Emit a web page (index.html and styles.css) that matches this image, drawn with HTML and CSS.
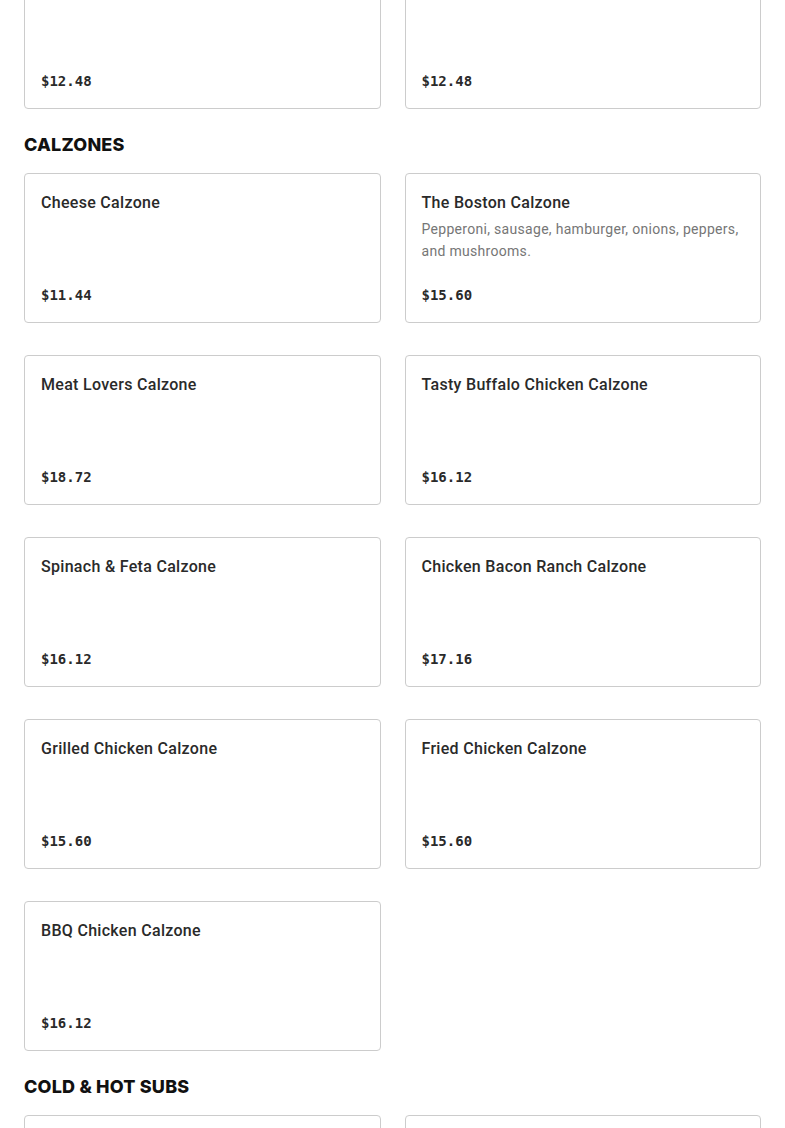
FILE: index.html
```html
<!DOCTYPE html>
<html lang="en">
<head>
<meta charset="utf-8">
<title>Menu</title>
<link rel="stylesheet" href="styles.css">
</head>
<body>
<main class="menu">
  <section class="section section-first">
    <div class="grid">
      <div class="card">
        <div class="card-title">&nbsp;</div>
        <div class="price">$12.48</div>
      </div>
      <div class="card">
        <div class="card-title">&nbsp;</div>
        <div class="price">$12.48</div>
      </div>
    </div>
  </section>

  <section class="section">
    <h2 class="section-title">CALZONES</h2>
    <div class="grid">
      <div class="card">
        <div class="card-title">Cheese Calzone</div>
        <div class="price">$11.44</div>
      </div>
      <div class="card">
        <div class="card-title">The Boston Calzone</div>
        <p class="desc">Pepperoni, sausage, hamburger, onions, peppers, and mushrooms.</p>
        <div class="price">$15.60</div>
      </div>
      <div class="card">
        <div class="card-title">Meat Lovers Calzone</div>
        <div class="price">$18.72</div>
      </div>
      <div class="card">
        <div class="card-title">Tasty Buffalo Chicken Calzone</div>
        <div class="price">$16.12</div>
      </div>
      <div class="card">
        <div class="card-title">Spinach &amp; Feta Calzone</div>
        <div class="price">$16.12</div>
      </div>
      <div class="card">
        <div class="card-title">Chicken Bacon Ranch Calzone</div>
        <div class="price">$17.16</div>
      </div>
      <div class="card">
        <div class="card-title">Grilled Chicken Calzone</div>
        <div class="price">$15.60</div>
      </div>
      <div class="card">
        <div class="card-title">Fried Chicken Calzone</div>
        <div class="price">$15.60</div>
      </div>
      <div class="card">
        <div class="card-title">BBQ Chicken Calzone</div>
        <div class="price">$16.12</div>
      </div>
    </div>
  </section>

  <section class="section">
    <h2 class="section-title">COLD &amp; HOT SUBS</h2>
    <div class="grid">
      <div class="card">
        <div class="card-title">&nbsp;</div>
        <div class="price">&nbsp;</div>
      </div>
      <div class="card">
        <div class="card-title">&nbsp;</div>
        <div class="price">&nbsp;</div>
      </div>
    </div>
  </section>
</main>
</body>
</html>
```

FILE: styles.css
```css
html, body {
  margin: 0;
  padding: 0;
  background: #ffffff;
}

body {
  font-family: Roboto, "Liberation Sans", Arial, sans-serif;
  color: #2a2a2a;
  overflow: hidden;
}

.menu {
  padding: 0 24px;
  margin-top: -41px;
}

.section {
  margin-bottom: 24px;
}

.section-title {
  margin: 0 0 16px;
  font-family: Inter, "Liberation Sans", Arial, sans-serif;
  font-size: 18px;
  line-height: 24px;
  font-weight: 800;
  color: #111111;
  letter-spacing: 0.2px;
}

.grid {
  display: grid;
  grid-template-columns: 1fr 1fr;
  column-gap: 24px;
  row-gap: 32px;
}

.card {
  box-sizing: border-box;
  min-height: 150px;
  border: 1px solid #cccccc;
  border-radius: 4px;
  padding: 16px 16px 17px;
  display: flex;
  flex-direction: column;
}

.card-title {
  padding-top: 1px;
  font-size: 16px;
  line-height: 24px;
  font-weight: 500;
  letter-spacing: 0.3px;
  color: #2a2a2a;
}

.desc {
  margin: 3px 0 0;
  font-size: 14px;
  line-height: 22px;
  letter-spacing: 0.3px;
  color: #767676;
}

.price {
  margin-top: auto;
  font-family: "DejaVu Sans Mono", "Liberation Mono", monospace;
  font-size: 14px;
  line-height: 20px;
  font-weight: 700;
  color: #2a2a2a;
}
```
